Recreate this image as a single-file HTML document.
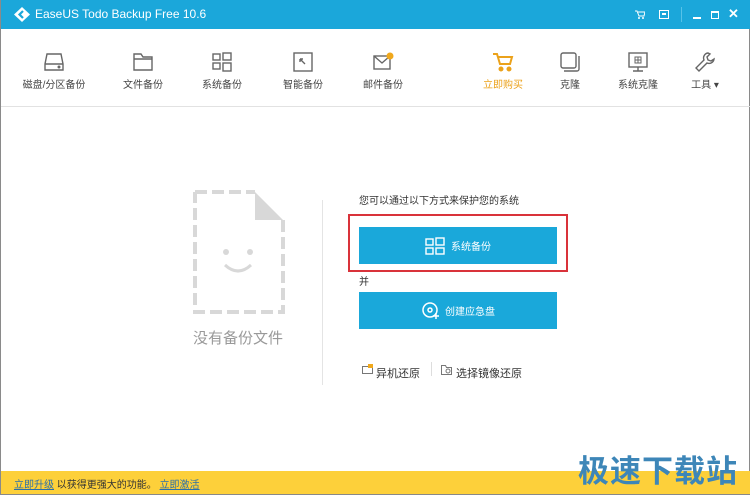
<!DOCTYPE html>
<html><head><meta charset="utf-8"><style>
*{margin:0;padding:0;box-sizing:border-box}
body{width:750px;height:495px;overflow:hidden;background:#fff;font-family:"Liberation Sans","Noto Sans CJK SC",sans-serif;position:relative;border-left:1px solid #8a8a8a;border-right:1px solid #8a8a8a}
.title{position:absolute;left:0;top:0;width:750px;height:29px;background:#1ba7da;color:#fff;font-size:12px}
.title .t{position:absolute;left:34px;top:7px}
.tb{position:absolute;top:29px;left:0;width:750px;height:78px;border-bottom:1px solid #e2e2e2}
.it{position:absolute;top:21px;width:80px;text-align:center;font-size:10px;color:#444}
.it svg{display:block;margin:0 auto 2px;width:24px;height:24px}
.abs{position:absolute}
.btn{position:absolute;left:358px;width:198px;height:37px;background:#1aa8da;color:#fff;font-size:10px;display:flex;align-items:center;justify-content:center}
.foot{position:absolute;left:0;top:471px;width:750px;height:24px;background:#fdd03a;font-size:10px;color:#333;padding:5px 0 0 13px;border-bottom:1px solid #888}
.foot a{color:#2c6fa8;text-decoration:underline}
</style></head><body>
<div class="title">
<svg class="abs" style="left:12px;top:6px" width="18" height="17" viewBox="0 0 18 17"><path d="M9 1 L17 8.5 L9 16 L1 8.5Z" fill="#fff"/><path d="M10 5 L6.5 8.5 L10 12" stroke="#1ba7da" stroke-width="2.2" fill="none"/></svg>
<span class="t">EaseUS Todo Backup Free 10.6</span>
<svg class="abs" style="left:634px;top:10px" width="10" height="9"><path d="M0 1h2l2 5h5l1-4H3" stroke="#fff" fill="none"/><circle cx="4" cy="8" r="1" fill="#fff"/><circle cx="8" cy="8" r="1" fill="#fff"/></svg>
<svg class="abs" style="left:658px;top:10px" width="10" height="9"><rect x="0.5" y="0.5" width="9" height="8" stroke="#fff" fill="none"/><rect x="3" y="3" width="4" height="2" fill="#fff"/></svg>
<div class="abs" style="left:680px;top:7px;width:1px;height:15px;background:#57c2e8"></div>
<div class="abs" style="left:692px;top:17px;width:8px;height:2px;background:#fff"></div>
<div class="abs" style="left:710px;top:11px;width:8px;height:8px;border:1px solid #fff;border-top-width:2px"></div>
<div class="abs" style="left:727px;top:6px;font-size:13px;font-weight:bold">✕</div>
</div>
<div class="tb">
<div class="it" style="left:13px"><svg viewBox="0 0 24 24" fill="none" stroke="#666" stroke-width="1.4"><path d="M5 4h14l2 10v6H3v-6Z M3 14h18"/><circle cx="17" cy="17" r=".8" fill="#666"/></svg>磁盘/分区备份</div>
<div class="it" style="left:102px"><svg viewBox="0 0 24 24" fill="none" stroke="#666" stroke-width="1.4"><path d="M3 4h7l2 3h9v13H3Z M3 9h18"/></svg>文件备份</div>
<div class="it" style="left:181px"><svg viewBox="0 0 24 24" fill="none" stroke="#666" stroke-width="1.4"><rect x="3" y="4" width="7" height="6"/><rect x="13" y="3" width="8" height="7"/><rect x="3" y="13" width="7" height="6"/><rect x="13" y="13" width="8" height="8"/></svg>系统备份</div>
<div class="it" style="left:262px"><svg viewBox="0 0 24 24" fill="none" stroke="#666" stroke-width="1.4"><rect x="3" y="3" width="18" height="18"/><path d="M9 9l5 5M9 9h3M9 9v3"/></svg>智能备份</div>
<div class="it" style="left:342px"><svg viewBox="0 0 24 24" fill="none" stroke="#666" stroke-width="1.4"><rect x="3" y="6" width="16" height="13"/><path d="M3 6l8 7 8-7"/><circle cx="19" cy="6" r="3.5" fill="#f0a81c" stroke="none"/></svg>邮件备份</div>
<div class="it" style="left:462px;color:#eba21b"><svg viewBox="0 0 24 24" fill="none" stroke="#eba21b" stroke-width="2"><path d="M2 4h4l3 10h10l2-7H7"/><circle cx="10" cy="19" r="1.5" fill="#eba21b"/><circle cx="18" cy="19" r="1.5" fill="#eba21b"/></svg>立即购买</div>
<div class="it" style="left:529px"><svg viewBox="0 0 24 24" fill="none" stroke="#666" stroke-width="1.4"><rect x="3" y="3" width="15" height="15" rx="2"/><path d="M6 21h13a2 2 0 0 0 2-2V6"/></svg>克隆</div>
<div class="it" style="left:597px"><svg viewBox="0 0 24 24" fill="none" stroke="#666" stroke-width="1.4"><rect x="3" y="3" width="18" height="14"/><path d="M12 17v4M7 21h10"/><path d="M9 7h6v6H9zM12 7v6M9 10h6" stroke-width="1"/></svg>系统克隆</div>
<div class="it" style="left:664px"><svg viewBox="0 0 24 24" fill="none" stroke="#666" stroke-width="1.4"><path d="M15 3a5 5 0 0 0-4 7L3 18l3 3 8-8a5 5 0 0 0 7-4l-3 2-3-1-1-3 3-3z"/></svg>工具 ▾</div>
</div>
<svg class="abs" style="left:192px;top:190px" width="92" height="124" viewBox="0 0 92 124" fill="none"><path d="M2 2H62 M90 30V122H2V2" stroke="#d8d8d8" stroke-width="4" stroke-dasharray="12 5"/><path d="M62 2L90 30H62Z" fill="#d8d8d8"/><circle cx="33" cy="62" r="3" fill="#d8d8d8"/><circle cx="57" cy="62" r="3" fill="#d8d8d8"/><path d="M32 75q13 12 26 0" stroke="#d8d8d8" stroke-width="3"/></svg>
<div class="abs" style="left:192px;top:327px;font-size:15px;color:#999">没有备份文件</div>
<div class="abs" style="left:321px;top:200px;width:1px;height:185px;background:#e4e4e4"></div>
<div class="abs" style="left:358px;top:192px;font-size:10px;color:#333">您可以通过以下方式来保护您的系统</div>
<div class="abs" style="left:347px;top:214px;width:220px;height:58px;border:2px solid #d9323a"></div>
<div class="btn" style="top:227px"><svg width="20" height="18" viewBox="0 0 20 18" fill="none" stroke="#fff" stroke-width="1.4" style="margin-right:6px"><rect x="1" y="2" width="7" height="6"/><rect x="11" y="1" width="8" height="7"/><rect x="1" y="11" width="7" height="6"/><rect x="11" y="11" width="8" height="6"/></svg>系统备份</div>
<div class="abs" style="left:358px;top:273px;font-size:10px;color:#333">并</div>
<div class="btn" style="top:292px"><svg width="20" height="20" viewBox="0 0 20 20" fill="none" stroke="#fff" stroke-width="1.5" style="margin-right:4px"><circle cx="9" cy="9" r="7"/><circle cx="9" cy="9" r="2"/><path d="M15 12v6M12 15h6"/></svg>创建应急盘</div>
<svg class="abs" style="left:361px;top:364px" width="12" height="12"><rect x="0.5" y="2.5" width="10" height="7" stroke="#777" fill="none"/><rect x="6" y="0" width="5" height="4" fill="#f0a81c"/></svg>
<div class="abs" style="left:375px;top:365px;font-size:11px;color:#333">异机还原</div>
<div class="abs" style="left:430px;top:362px;width:1px;height:14px;background:#ddd"></div>
<svg class="abs" style="left:440px;top:364px" width="12" height="12"><path d="M.5 1.5h4l1 2h5v7H.5z" stroke="#777" fill="none"/><circle cx="7" cy="7" r="2" stroke="#777" fill="none"/></svg>
<div class="abs" style="left:455px;top:365px;font-size:11px;color:#333">选择镜像还原</div>
<div class="foot"><a>立即升级</a> 以获得更强大的功能。 <a>立即激活</a></div>
<div class="abs" style="left:577px;top:446px;font-size:31px;font-weight:bold;color:#3d86b8;letter-spacing:1px">极速下载站</div>
</body></html>
